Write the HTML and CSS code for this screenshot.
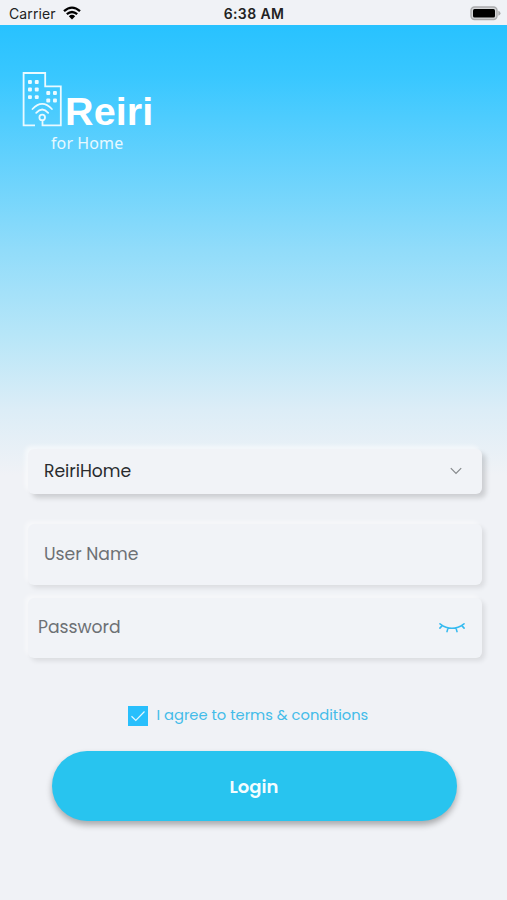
FILE: index.html
```
<!DOCTYPE html>
<html lang="en">
<head>
  <meta charset="utf-8">
  <title>Reiri for Home</title>
  <link rel="stylesheet" href="styles.css">
</head>
<body>
  <header class="status-bar">
    <div class="carrier">
      <span>Carrier</span>
      <svg class="wifi" viewBox="0 0 18 14">
        <path d="M1 5.2Q9-2 17 5.2M3.8 8.2Q9 3.7 14.2 8.2" fill="none" stroke="#000" stroke-width="2.3"/>
        <path d="M5.8 10.2Q9 7.4 12.2 10.2L9 13.5Z"/>
      </svg>
    </div>
    <div class="clock">6:38 AM</div>
    <svg class="battery" viewBox="0 0 31 15">
      <rect x="1" y="1" width="26" height="12.5" rx="3.5" fill="#d5d6d8" stroke="#aaabad" stroke-width="1.4"/>
      <rect x="3" y="3" width="22" height="8.5" rx="1.5"/>
      <path d="M28.3 4.8Q30.5 5.5 30.5 7.2T28.3 9.7Z" fill="#aaabad"/>
    </svg>
  </header>

  <main class="screen">
    <div class="logo">
      <div class="logo-top">
        <svg class="building" viewBox="0 0 41 56">
          <g fill="none" stroke="#eafaff" stroke-width="1.8">
            <path d="M14 54.4H2.6V2H24.2V15.3H39.8V54.4H21.5V49.5"/>
            <circle cx="21.2" cy="46.4" r="2.8"/>
            <path d="M11.5 38Q21.2 27.6 30.9 38M15.2 41.8Q21.2 35.2 27.2 41.8" stroke-linecap="round"/>
          </g>
          <g fill="#eafaff">
            <rect x="7" y="9" width="3.9" height="3.9" rx="1"/>
            <rect x="13.8" y="9" width="3.9" height="3.9" rx="1"/>
            <rect x="7" y="16.5" width="3.9" height="3.9" rx="1"/>
            <rect x="13.8" y="16.5" width="3.9" height="3.9" rx="1"/>
            <rect x="7" y="24.2" width="3.9" height="3.9" rx="1"/>
            <rect x="13.8" y="24.2" width="3.9" height="3.9" rx="1"/>
            <rect x="25.3" y="20" width="3.9" height="3.9" rx="1"/>
            <rect x="32" y="20" width="3.9" height="3.9" rx="1"/>
            <rect x="25.3" y="27.6" width="3.9" height="3.9" rx="1"/>
            <rect x="32" y="27.6" width="3.9" height="3.9" rx="1"/>
          </g>
        </svg>
        <span class="brand">Reiri</span>
      </div>
      <div class="tagline">for Home</div>
    </div>

    <form class="login-form">
      <div class="field select">
        <span class="site">ReiriHome</span>
        <svg class="chevron" viewBox="0 0 12 8">
          <path d="M.8 1.2L6 6.4L11.2 1.2" fill="none" stroke="#85888b" stroke-width="1.2"/>
        </svg>
      </div>
      <div class="field user"><span class="user-label">User Name</span></div>
      <div class="field password">
        <span class="password-label">Password</span>
        <svg class="eye" viewBox="0 0 26 11">
          <path d="M1 1.8Q13 10.8 25 1.8M3.2 3.6L.9 6.1M9 6.1L8 9.6M17 6.1L18 9.6M22.8 3.6L25.1 6.1" fill="none" stroke="#35baf0" stroke-width="1.6" stroke-linecap="round"/>
        </svg>
      </div>

      <div class="terms">
        <svg class="checkbox" viewBox="0 0 20 20">
          <rect width="20" height="20" fill="#28bffc"/>
          <path d="M3.5 10.3L7.8 14.5L16.5 5.5" fill="none" stroke="#e4f8ff" stroke-width="1.2"/>
        </svg>
        <span class="terms-label">I agree to terms &amp; conditions</span>
      </div>
      <button class="login" type="button">Login</button>
    </form>
  </main>
</body>
</html>
```
FILE: styles.css
```
* {
  box-sizing: border-box;
}

body {
  margin: 0;
  height: 900px;
  overflow: hidden;
  background: #f0f2f6;
  font-family: Poppins, "Open Sans", sans-serif;
}

/* STATUS BAR */
.status-bar {
  display: grid;
  grid-template-columns: 1fr auto 1fr;
  align-items: center;
  height: 25px;
  padding: 2px 6px 0 9px;
  font-family: Inter, sans-serif;
  font-size: 14px;
  color: #222;
}

.carrier {
  display: flex;
  align-items: center;
  gap: 7px;
  letter-spacing: .1px;
}

.wifi {
  width: 18px;
  height: 14px;
  margin-top: -2px;
}

.clock {
  margin-right: 2px;
  font-weight: 600;
  letter-spacing: .4px;
}

.battery {
  justify-self: end;
  width: 31px;
  height: 15px;
}

/* BACKGROUND */
.screen {
  height: 875px;
  padding: 46px 25px 0 21px;
  background: linear-gradient(#28c2ff 0, #38c7ff 50px, #63d1fd 135px, #91dcfa 225px, #b7e6f8 310px, #dcedf7 385px, #f0f2f6 450px);
}

/* LOGO */
.logo {
  height: 378px;
  color: #fff;
}

.logo-top {
  display: flex;
  align-items: flex-end;
  height: 56px;
}

.building {
  width: 41px;
  height: 56px;
}

.brand {
  margin: 0 0 -4px 3px;
  font: bold 39.5px/39px "Liberation Sans", sans-serif;
  letter-spacing: .1px;
}

.tagline {
  padding: 5px 0 0 30px;
  font: 16px/22px "Noto Sans", sans-serif;
  letter-spacing: .1px;
  color: #e8f9ff;
}

/* FORM */
.login-form {
  padding-left: 7px;
}

.field {
  display: flex;
  align-items: center;
  justify-content: space-between;
  padding: 0 20px 2px 16px;
  border-radius: 6px;
  background: #f1f3f7;
  box-shadow: 3px 3px 5px rgba(0, 0, 0, .09), -3px -3px 4px rgba(255, 255, 255, .45);
  font-size: 17.2px;
  color: #6d7074;
}

.select {
  height: 45px;
  color: #292b2e;
  box-shadow: 4px 4px 5px rgba(0, 0, 0, .15), -3px -3px 4px rgba(255, 255, 255, .55);
}

.user {
  height: 61px;
  margin-top: 30px;
}

.password {
  height: 60px;
  margin-top: 13px;
  padding: 0 17px 2px 10px;
}

.chevron {
  width: 12px;
  height: 8px;
}

.eye {
  width: 26px;
  height: 11px;
}

/* TERMS AND LOGIN */
.terms {
  display: flex;
  align-items: center;
  height: 20px;
  margin: 48px 0 0 99.5px;
  font-size: 14.7px;
  color: #43bce9;
}

.checkbox {
  width: 20px;
  height: 20px;
  margin-right: 9px;
}

.terms-label {
  margin-top: -2px;
  white-space: nowrap;
}

.login {
  display: block;
  width: 405px;
  height: 70px;
  margin: 25px 0 0 23.5px;
  padding: 0;
  border: 0;
  border-radius: 35px;
  background: #28c4ef;
  box-shadow: 0 4px 6px rgba(0, 0, 0, .3);
  font: 600 18px Poppins, "Open Sans", sans-serif;
  color: #f3fdff;
}
```
